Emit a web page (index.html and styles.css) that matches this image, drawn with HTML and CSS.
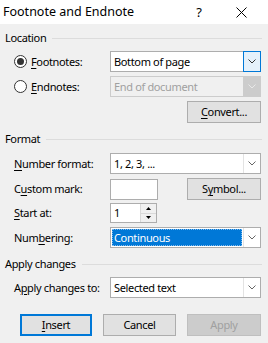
FILE: index.html
```html
<!DOCTYPE html>
<html>
<head>
<meta charset="utf-8">
<link rel="stylesheet" href="styles.css">
</head>
<body>
<div class="dialog">
  <div class="titlebar">
    <span class="title">Footnote and Endnote</span>
    <span class="help">?</span>
    <span class="close"><svg width="11" height="11" viewBox="0 0 11 11"><path d="M0.5 0.5 L10.5 10.5 M10.5 0.5 L0.5 10.5" stroke="#000" stroke-width="1"/></svg></span>
  </div>
  <div class="content">
    <div class="group g-location"><span>Location</span><i class="rule"></i></div>

    <div class="row r-foot">
      <div class="lbl radio-lbl"><span class="radio checked"></span><span><u>F</u>ootnotes:</span></div>
      <div class="combo">
        <span class="val">Bottom of page</span>
        <span class="drop focus"><svg width="8" height="5" viewBox="0 0 8 5"><path d="M0.5 0.5 L4 4 L7.5 0.5" fill="none" stroke="#333"/></svg></span>
      </div>
    </div>

    <div class="row r-end">
      <div class="lbl radio-lbl"><span class="radio"></span><span><u>E</u>ndnotes:</span></div>
      <div class="combo disabled">
        <span class="val">End of document</span>
        <span class="drop"><svg width="8" height="5" viewBox="0 0 8 5"><path d="M0.5 0.5 L4 4 L7.5 0.5" fill="none" stroke="#e8e8e8"/></svg></span>
      </div>
    </div>

    <div class="btnrow r-convert">
      <div class="button"><u>C</u>onvert...</div>
    </div>

    <div class="group g-format"><span>Format</span><i class="rule"></i></div>

    <div class="row r-numfmt">
      <div class="lbl"><u>N</u>umber format:</div>
      <div class="combo">
        <span class="val">1, 2, 3, ...</span>
        <span class="drop sep"><svg width="8" height="5" viewBox="0 0 8 5"><path d="M0.5 0.5 L4 4 L7.5 0.5" fill="none" stroke="#666"/></svg></span>
      </div>
    </div>

    <div class="row r-custom">
      <div class="lbl">C<u>u</u>stom mark:</div>
      <div class="split">
        <div class="textbox"></div>
        <div class="button">S<u>y</u>mbol...</div>
      </div>
    </div>

    <div class="row r-start">
      <div class="lbl"><u>S</u>tart at:</div>
      <div class="spin">
        <span class="spinval">1</span>
        <span class="spinbtns">
          <span class="sb"><svg width="5" height="3" viewBox="0 0 5 3"><path d="M0 3 L2.5 0 L5 3 Z" fill="#000"/></svg></span>
          <span class="sb"><svg width="5" height="3" viewBox="0 0 5 3"><path d="M0 0 L2.5 3 L5 0 Z" fill="#000"/></svg></span>
        </span>
      </div>
    </div>

    <div class="row r-numbering">
      <div class="lbl">Num<u>b</u>ering:</div>
      <div class="combo">
        <span class="val selected"><span>Continuous</span></span>
        <span class="drop sep"><svg width="8" height="5" viewBox="0 0 8 5"><path d="M0.5 0.5 L4 4 L7.5 0.5" fill="none" stroke="#666"/></svg></span>
      </div>
    </div>

    <div class="group g-apply"><span>Apply changes</span><i class="rule"></i></div>

    <div class="row r-applyto">
      <div class="lbl">A<u>p</u>ply changes to:</div>
      <div class="combo">
        <span class="val">Selected text</span>
        <span class="drop sep"><svg width="8" height="5" viewBox="0 0 8 5"><path d="M0.5 0.5 L4 4 L7.5 0.5" fill="none" stroke="#666"/></svg></span>
      </div>
    </div>

    <div class="footer">
      <div class="button default"><u>I</u>nsert</div>
      <div class="button cancel">Cancel</div>
      <div class="button disabled">Apply</div>
    </div>
  </div>
</div>
</body>
</html>
```

FILE: styles.css
```css
html, body {
  margin: 0;
  padding: 0;
  background: #f0f0f0;
}
body {
  font-family: "Noto Sans", "Open Sans", sans-serif;
  font-size: 11px;
  letter-spacing: -0.35px;
  color: #000;
}
.dialog {
  width: 268px;
  height: 343px;
  background: #f0f0f0;
  overflow: hidden;
}
.titlebar {
  height: 24px;
  background: #fff;
  display: flex;
  align-items: center;
  letter-spacing: 0;
}
.title {
  padding-left: 3px;
  font-size: 12.5px;
  flex: 1;
  line-height: 16px;
}
.help {
  width: 12px;
  text-align: center;
  margin-right: 31px;
  font-size: 13px;
}
.close {
  width: 11px;
  height: 11px;
  margin-right: 21px;
  display: flex;
}
.content {
  padding: 0 7px 0 5px;
}
.group {
  display: flex;
  align-items: center;
  height: 16px;
  line-height: 16px;
}
.group .rule {
  flex: 1;
  height: 1px;
  background: #dcdcdc;
  margin-left: 6px;
  margin-right: -1px;
}
.g-location { margin-top: 6px; }
.g-format { margin-top: 8px; }
.g-apply { margin-top: 8px; }

.row {
  display: grid;
  grid-template-columns: 105px 1fr;
  align-items: center;
  height: 21px;
}
.lbl {
  padding-left: 9px;
  line-height: 16px;
  white-space: nowrap;
}
.radio-lbl {
  padding-left: 9px;
  display: flex;
  align-items: center;
  gap: 4px;
}
.radio {
  width: 13px;
  height: 13px;
  box-sizing: border-box;
  border: 1px solid #333;
  border-radius: 50%;
  background: #fff;
  display: flex;
  align-items: center;
  justify-content: center;
}
.radio.checked::after {
  content: "";
  width: 7px;
  height: 7px;
  border-radius: 50%;
  background: #333;
}

.r-foot { margin-top: 5px; }
.r-end { margin-top: 4px; }
.r-numfmt { margin-top: 6px; }
.r-custom { margin-top: 4px; }
.r-start { margin-top: 4px; height: 20px; }
.r-numbering { margin-top: 4px; }
.r-applyto { margin-top: 5px; }

.combo {
  height: 21px;
  box-sizing: border-box;
  border: 1px solid #adadad;
  background: #fff;
  display: flex;
  align-items: stretch;
}
.combo .val {
  flex: 1;
  padding-left: 3px;
  display: flex;
  align-items: center;
  line-height: 16px;
  white-space: nowrap;
}
.combo .drop {
  width: 17px;
  display: flex;
  align-items: center;
  justify-content: center;
  box-sizing: border-box;
}
.combo .drop.sep {
  border-left: 1px solid #e3e3e3;
}
.combo .drop.focus {
  background: #e5f1fb;
  border: 1px solid #0078d7;
  margin: -1px -1px -1px 0;
  width: 18px;
}
.combo.disabled {
  border-color: #cccccc;
  background: #f0f0f0;
  color: #a0a0a0;
}
.combo.disabled .drop {
  background: #cccccc;
}
.combo .val.selected {
  padding: 1px;
}
.combo .val.selected span {
  flex: 1;
  align-self: stretch;
  background: #0078d7;
  color: #fff;
  display: flex;
  align-items: center;
  padding-left: 2px;
  outline: 1px dotted #7fb9ec;
  outline-offset: -1px;
}

.btnrow {
  display: flex;
  justify-content: flex-end;
}
.r-convert { margin-top: 4px; }
.button {
  width: 74px;
  height: 22px;
  box-sizing: border-box;
  border: 1px solid #adadad;
  background: #e1e1e1;
  display: flex;
  align-items: center;
  justify-content: center;
  line-height: 16px;
}
.split {
  display: flex;
  justify-content: space-between;
  align-items: center;
}
.textbox {
  width: 48px;
  height: 21px;
  box-sizing: border-box;
  border: 1px solid #adadad;
  background: #fff;
}
.split .button { height: 22px; }

.spin {
  width: 47px;
  height: 20px;
  box-sizing: border-box;
  border: 1px solid #adadad;
  background: #fff;
  display: flex;
}
.spinval {
  flex: 1;
  padding-left: 3px;
  line-height: 18px;
}
.spinbtns {
  width: 15px;
  display: flex;
  flex-direction: column;
  border-left: 1px solid #d9d9d9;
}
.sb {
  flex: 1;
  display: flex;
  align-items: center;
  justify-content: center;
  background: #f0f0f0;
}
.sb + .sb { border-top: 1px solid #d9d9d9; }

.footer {
  margin-top: 16px;
  display: flex;
  padding-left: 15px;
}
.footer .button.default {
  width: 72px;
  border: 2px solid #0078d7;
}
.footer .button.cancel {
  width: 73px;
  margin-left: 11px;
}
.footer .button.disabled {
  margin-left: 11px;
  background: #cccccc;
  border-color: #bfbfbf;
  color: #a0a0a0;
}
u { text-decoration-thickness: 1px; text-underline-offset: 2px; }
```
